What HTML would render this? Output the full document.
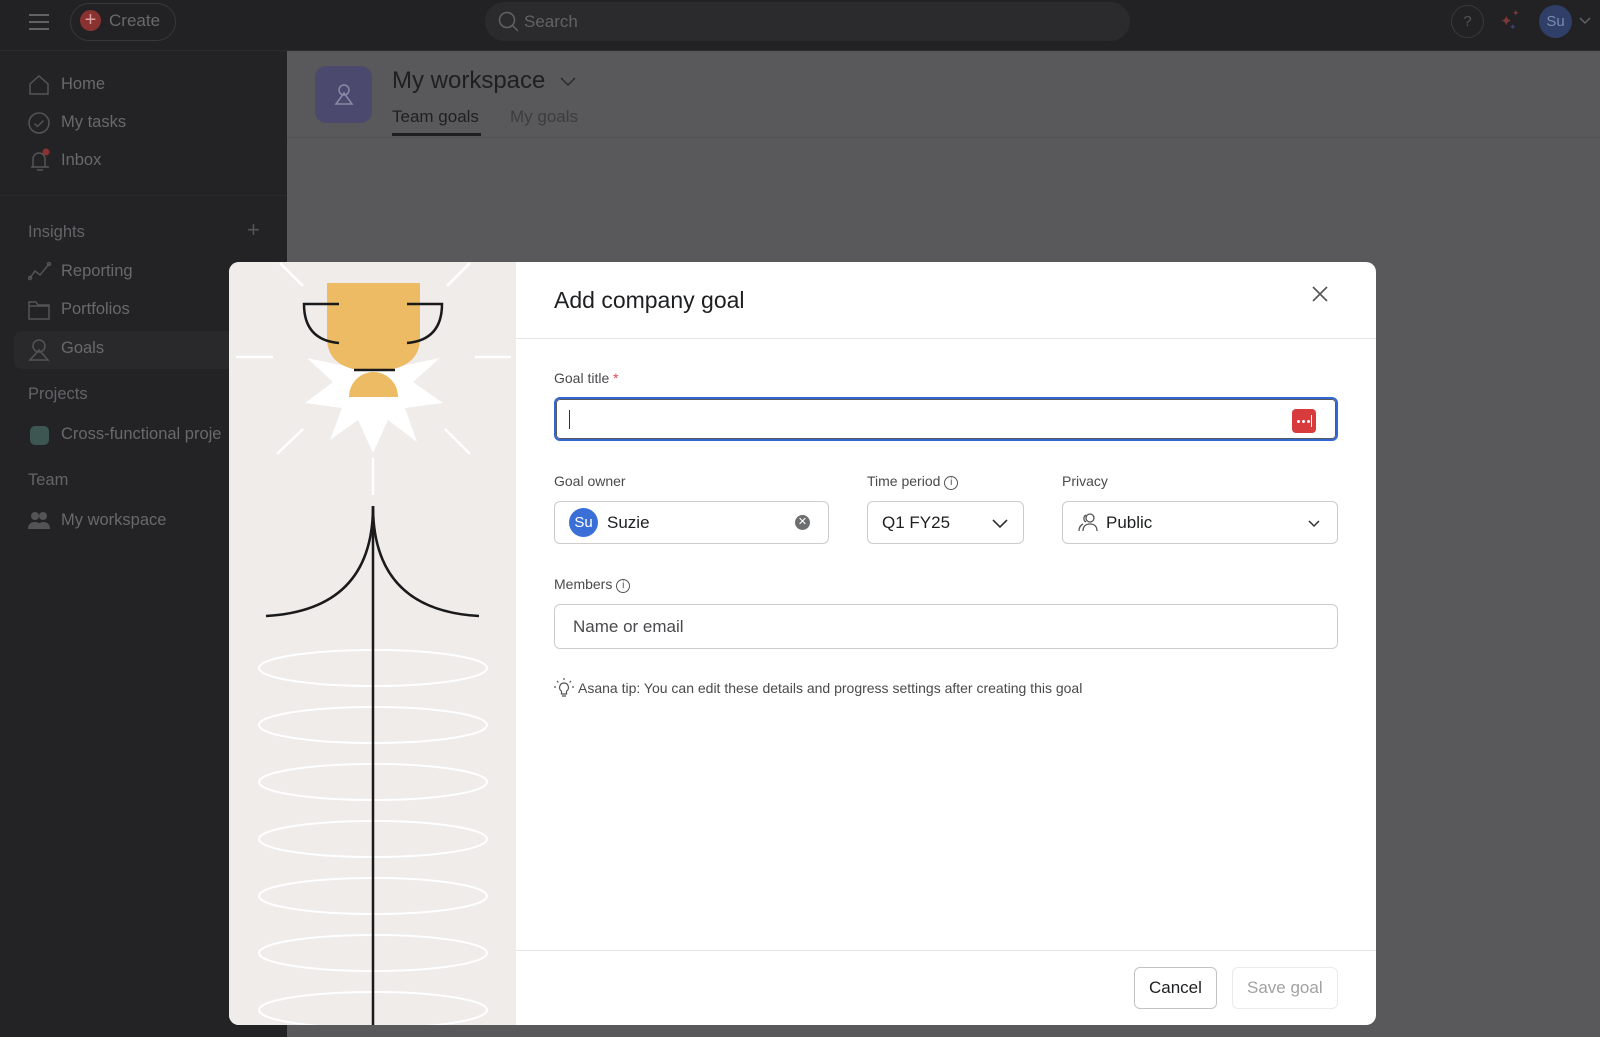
<!DOCTYPE html>
<html><head><meta charset="utf-8"><style>
*{box-sizing:border-box;margin:0;padding:0}
body{width:1600px;height:1037px;overflow:hidden;background:#59595b;font-family:"Liberation Sans",Arial,sans-serif;position:relative}
.top{position:absolute;left:0;top:0;width:1600px;height:51px;background:#222224;border-bottom:1px solid #2c2c2e}
.side{position:absolute;left:0;top:51px;width:287px;height:986px;background:#232325}
.si{position:absolute;left:61px;font-size:16.5px;color:#69696c}
.sh{position:absolute;left:28px;font-size:16.5px;color:#646467}
.ic{position:absolute;left:28px}
.a{position:absolute}
.dlg{position:absolute;left:229px;top:262px;width:1147px;height:763px;background:#fff;border-radius:10px;overflow:hidden}
.lbl{position:absolute;font-size:14px;color:#4a4a4d}
.box{position:absolute;border:1px solid #cfcbcb;border-radius:6px;background:#fff}
</style></head><body>
<div class="top">
  <div class="a" style="left:29px;top:14px;width:20px;height:2px;background:#626265;box-shadow:0 7px 0 #626265,0 14px 0 #626265"></div>
  <div class="a" style="left:70px;top:3px;width:106px;height:38px;border:1px solid #38383a;border-radius:19px"></div>
  <div class="a" style="left:80px;top:10px;width:21px;height:21px;border-radius:50%;background:#8a3232;color:#d9a0a0;font-size:20px;line-height:20px;text-align:center">+</div>
  <div class="a" style="left:109px;top:11px;font-size:17px;color:#69696c">Create</div>
  <div class="a" style="left:485px;top:2px;width:645px;height:39px;border-radius:20px;background:#2b2b2d"></div>
  <svg class="a" style="left:498px;top:11px" width="22" height="22" viewBox="0 0 22 22"><circle cx="9" cy="9" r="7.5" fill="none" stroke="#626265" stroke-width="1.5"/><path d="M14.5 14.5L20 20" stroke="#626265" stroke-width="1.5"/></svg>
  <div class="a" style="left:524px;top:12px;font-size:17px;color:#626265">Search</div>
  <div class="a" style="left:1451px;top:5px;width:33px;height:33px;border:1px solid #39393b;border-radius:50%;color:#555558;text-align:center;line-height:31px;font-size:15px">?</div>
  <div class="a" style="left:1500px;top:12px;color:#7a3838;font-size:15px">✦</div>
  <div class="a" style="left:1512px;top:8px;color:#7a3838;font-size:9px">✦</div>
  <div class="a" style="left:1509px;top:22px;color:#3c3f72;font-size:9px">✦</div>
  <div class="a" style="left:1539px;top:5px;width:33px;height:33px;border-radius:50%;background:#2f3f68;color:#7b8aae;text-align:center;line-height:33px;font-size:15px">Su</div>
  <svg class="a" style="left:1579px;top:17px" width="12" height="8"><path d="M1 1l5 5 5-5" fill="none" stroke="#626265" stroke-width="1.5"/></svg>
</div>
<div class="side">
  <svg class="ic" style="top:23px" width="22" height="22" viewBox="0 0 22 22" fill="none" stroke="#545457" stroke-width="1.5"><path d="M2 10L11 2l9 8v10H2z"/></svg>
  <div class="si" style="top:24px">Home</div>
  <svg class="ic" style="top:61px" width="22" height="22" viewBox="0 0 22 22" fill="none" stroke="#545457" stroke-width="1.5"><circle cx="11" cy="11" r="10"/><path d="M6.5 11.5l3 3 6-6"/></svg>
  <div class="si" style="top:62px">My tasks</div>
  <svg class="ic" style="top:97px" width="24" height="24" viewBox="0 0 24 24" fill="none" stroke="#545457" stroke-width="1.5"><path d="M3 19h18M5 19V11a6 6 0 0112 0v8M9 22h6"/><circle cx="18" cy="4" r="3.5" fill="#8a3232" stroke="none"/></svg>
  <div class="si" style="top:100px">Inbox</div>
  <div class="a" style="left:0;top:144px;width:287px;height:1px;background:#2b2b2d"></div>
  <div class="sh" style="top:172px">Insights</div>
  <div class="a" style="left:247px;top:166px;font-size:22px;color:#545457">+</div>
  <svg class="ic" style="top:210px" width="24" height="20" viewBox="0 0 24 20" fill="none" stroke="#545457" stroke-width="1.5"><path d="M2 17l5-7 5 4 9-11"/><circle cx="2" cy="17" r="1.5"/><circle cx="21" cy="3" r="1.5"/></svg>
  <div class="si" style="top:211px">Reporting</div>
  <svg class="ic" style="top:249px" width="22" height="20" viewBox="0 0 22 20" fill="none" stroke="#545457" stroke-width="1.5"><path d="M1 2h7l2 3h11v14H1z M1 6h20"/></svg>
  <div class="si" style="top:249px">Portfolios</div>
  <div class="a" style="left:14px;top:280px;width:273px;height:38px;background:#29292b;border-radius:8px 0 0 8px"></div>
  <svg class="ic" style="top:287px" width="22" height="24" viewBox="0 0 22 24" fill="none" stroke="#545457" stroke-width="1.5"><circle cx="11" cy="8" r="6"/><path d="M11 12L2 22h18z"/></svg>
  <div class="si" style="top:288px">Goals</div>
  <div class="sh" style="top:334px">Projects</div>
  <div class="a" style="left:30px;top:375px;width:19px;height:19px;border-radius:5px;background:#3e5651"></div>
  <div class="si" style="top:374px;white-space:nowrap">Cross-functional proje</div>
  <div class="sh" style="top:420px">Team</div>
  <svg class="ic" style="top:460px" width="22" height="18" viewBox="0 0 22 18" fill="#545457"><circle cx="7" cy="5" r="4"/><circle cx="15" cy="5" r="4"/><path d="M0 18c0-5 3-7 7-7s7 2 7 7z M10 18c0-5 2-7 5-7 4 0 7 2 7 7z"/></svg>
  <div class="si" style="top:460px">My workspace</div>
</div>
<div class="a" style="left:287px;top:51px;width:1313px;height:87px;border-bottom:1px solid #525254"></div>
<div class="a" style="left:315px;top:66px;width:57px;height:57px;border-radius:11px;background:#4b4a6e"></div>
<svg class="a" style="left:333px;top:82px" width="22" height="26" viewBox="0 0 22 26" fill="none" stroke="#8a89a6" stroke-width="1.5"><circle cx="11" cy="8" r="5"/><path d="M11 11L3 22h16z"/></svg>
<div class="a" style="left:392px;top:67px;font-size:24px;color:#1f1f21">My workspace</div>
<svg class="a" style="left:560px;top:77px" width="16" height="10"><path d="M1 1l7 7 7-7" fill="none" stroke="#2a2a2c" stroke-width="1.5"/></svg>
<div class="a" style="left:392px;top:107px;font-size:17px;color:#1f1f21">Team goals</div>
<div class="a" style="left:392px;top:133px;width:89px;height:3px;background:#1f1f21"></div>
<div class="a" style="left:510px;top:107px;font-size:17px;color:#3d3d40">My goals</div>

<div class="dlg">
  <svg class="a" style="left:0;top:0" width="287" height="763" viewBox="229 262 287 763">
    <rect x="229" y="262" width="287" height="763" fill="#efecea"/>
    <g stroke="#fff" stroke-width="2.5" fill="none">
      <path d="M280 263L303 286M470 263L447 286M236 357H273M475 357H511M277 454L303 429M470 454L445 429M373 458V495"/>
    </g>
    <g stroke="#fff" stroke-width="2" fill="none">
      <ellipse cx="373" cy="668" rx="114" ry="18"/><ellipse cx="373" cy="725" rx="114" ry="18"/>
      <ellipse cx="373" cy="782" rx="114" ry="18"/><ellipse cx="373" cy="839" rx="114" ry="18"/>
      <ellipse cx="373" cy="896" rx="114" ry="18"/><ellipse cx="373" cy="953" rx="114" ry="18"/>
      <ellipse cx="373" cy="1010" rx="114" ry="18"/>
    </g>
    <path d="M307 358L355 368L392 368L440 358L413 382L443 403L405 408L417 442L388 420L373 453L358 420L330 440L342 408L305 403L333 382Z" fill="#fff"/>
    <path d="M327 283H420V338Q420 368 380 371H366Q327 368 327 338Z" fill="#ecbb63"/>
    <path d="M349 397A24.5 25 0 0 1 398 397Z" fill="#ecbb63"/>
    <g stroke="#1a1a1a" stroke-width="2.5" fill="none">
      <path d="M339 304H304Q304 340 339 343"/>
      <path d="M407 304H442Q442 340 407 343"/>
      <path d="M354 370H395"/>
      <path d="M373 506V1025"/>
      <path d="M373 506Q373 610 266 616M373 506Q373 610 479 616"/>
    </g>
  </svg>
  <div class="a" style="left:325px;top:25px;font-size:23px;color:#1e1f21">Add company goal</div>
  <svg class="a" style="left:1083px;top:24px" width="16" height="16"><path d="M1 1l14 14M15 1L1 15" stroke="#555" stroke-width="1.6"/></svg>
  <div class="a" style="left:287px;top:76px;width:860px;height:1px;background:#e8e6e6"></div>
  <div class="lbl" style="left:325px;top:108px">Goal title <span style="color:#e0484e">*</span></div>
  <div class="box" style="left:325px;top:135px;width:784px;height:44px;border:2px solid #3067d4;box-shadow:0 0 0 1px #5a5a5a inset"></div>
  <div class="a" style="left:340px;top:148px;width:1px;height:19px;background:#333"></div>
  <div class="a" style="left:1063px;top:147px;width:24px;height:24px;border-radius:4px;background:#d83b3b"></div>
  <div class="a" style="left:1068px;top:158px;width:3px;height:3px;border-radius:50%;background:#fff;box-shadow:5px 0 0 #fff,10px 0 0 #fff"></div>
  <div class="a" style="left:1082px;top:153px;width:1px;height:12px;background:#fff"></div>
  <div class="lbl" style="left:325px;top:211px">Goal owner</div>
  <div class="lbl" style="left:638px;top:211px">Time period <span style="display:inline-block;width:14px;height:14px;border:1px solid #555;border-radius:50%;font-size:10px;text-align:center;line-height:12px;vertical-align:1px">i</span></div>
  <div class="lbl" style="left:833px;top:211px">Privacy</div>
  <div class="box" style="left:325px;top:239px;width:275px;height:43px"></div>
  <div class="a" style="left:340px;top:246px;width:29px;height:29px;border-radius:50%;background:#3a6fd8;color:#fff;font-size:15px;text-align:center;line-height:29px">Su</div>
  <div class="a" style="left:378px;top:251px;font-size:17px;color:#1e1f21">Suzie</div>
  <div class="a" style="left:566px;top:253px;width:15px;height:15px;border-radius:50%;background:#6d6e6f;color:#fff;font-size:11px;text-align:center;line-height:15px">✕</div>
  <div class="box" style="left:638px;top:239px;width:157px;height:43px"></div>
  <div class="a" style="left:653px;top:251px;font-size:17px;color:#1e1f21">Q1 FY25</div>
  <svg class="a" style="left:763px;top:257px" width="16" height="10"><path d="M1 1l7 7 7-7" fill="none" stroke="#333" stroke-width="1.6"/></svg>
  <div class="box" style="left:833px;top:239px;width:276px;height:43px"></div>
  <svg class="a" style="left:849px;top:251px" width="20" height="19" viewBox="0 0 20 19" fill="none" stroke="#555" stroke-width="1.3"><circle cx="12" cy="5" r="4"/><path d="M5 18c0-5 3-7 7-7s7 2 7 7M8 2a4 4 0 000 7M1 18c0-4 2-6 4-7"/></svg>
  <div class="a" style="left:877px;top:251px;font-size:17px;color:#1e1f21">Public</div>
  <svg class="a" style="left:1079px;top:258px" width="12" height="8"><path d="M1 1l5 5 5-5" fill="none" stroke="#333" stroke-width="1.5"/></svg>
  <div class="lbl" style="left:325px;top:314px">Members <span style="display:inline-block;width:14px;height:14px;border:1px solid #555;border-radius:50%;font-size:10px;text-align:center;line-height:12px;vertical-align:1px">i</span></div>
  <div class="box" style="left:325px;top:342px;width:784px;height:45px"></div>
  <div class="a" style="left:344px;top:355px;font-size:17px;color:#4a4a4d">Name or email</div>
  <svg class="a" style="left:325px;top:416px" width="20" height="20" viewBox="0 0 20 20" fill="none" stroke="#555" stroke-width="1.2"><path d="M10 5a4.5 4.5 0 00-2.5 8.2V16h5v-2.8A4.5 4.5 0 0010 5zM8 18h4M10 0v2M3 3l1.4 1.4M17 3l-1.4 1.4M0 9h2M18 9h2"/></svg>
  <div class="a" style="left:349px;top:418px;font-size:14px;color:#4a4a4d">Asana tip: You can edit these details and progress settings after creating this goal</div>
  <div class="a" style="left:287px;top:688px;width:860px;height:1px;background:#e8e6e6"></div>
  <div class="box" style="left:905px;top:705px;width:83px;height:42px;border-color:#c5c2c2"></div>
  <div class="a" style="left:920px;top:716px;font-size:17px;color:#1e1f21">Cancel</div>
  <div class="box" style="left:1003px;top:705px;width:106px;height:42px;border-color:#ece9e9"></div>
  <div class="a" style="left:1018px;top:716px;font-size:17px;color:#a3a1a1">Save goal</div>
</div>
</body></html>
